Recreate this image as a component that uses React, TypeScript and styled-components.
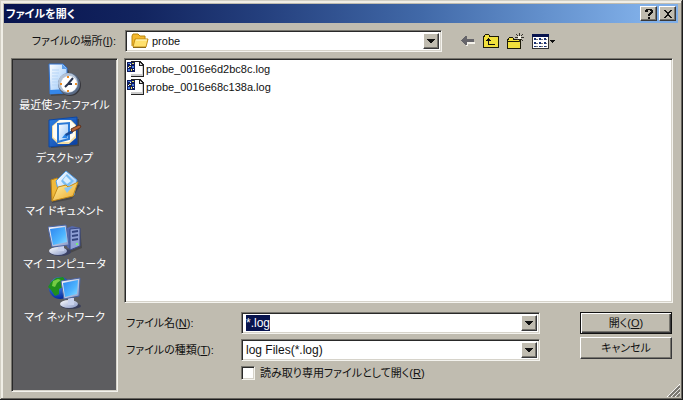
import React, { useEffect, useRef } from "react";
import styled, { createGlobalStyle, css } from "styled-components";

const face = "#c0bcb0";
const navy = "#08144e";

const GlobalStyle = createGlobalStyle`
  * { box-sizing: border-box; }
  html, body { margin: 0; padding: 0; background: ${face}; }
  body, button, input, select {
    font-family: "Liberation Sans", "Noto Sans CJK JP", sans-serif;
    font-size: 11px;
    line-height: 16px;
    color: #111;
    font-feature-settings: "palt";
  }
  svg { display: block; flex: none; }
`;

const sunken = css`
  border: 1px solid;
  border-color: #77756e #f4f3ee #f4f3ee #77756e;
  box-shadow: inset 1px 1px 0 #292929, inset -1px -1px 0 #d6d3ca;
`;

const raised = css`
  background: ${face};
  border: 1px solid;
  border-color: #fff #38383a #38383a #fff;
  box-shadow: inset -1px -1px 0 #77756e;
`;

const Dialog = styled.main`
  position: relative;
  display: flex;
  flex-direction: column;
  min-height: 100vh;
  padding: 4px 4px 3px;
  background: ${face};
  border-right: 1px solid #1c1c1c;
  border-bottom: 1px solid #1c1c1c;
  box-shadow: inset 1px 1px 0 #d2cfc4, inset -1px -1px 0 #66645e,
    inset 3px 3px 0 #f0eee6;
`;

const Face = styled.div`
  display: flex;
  flex-direction: column;
  flex: 1;
  background: ${face};
`;

const TitleBar = styled.header`
  display: flex;
  align-items: center;
  gap: 2px;
  height: 19px;
  padding: 0 2px;
  background: linear-gradient(90deg, ${navy} 0%, #12245f 20%, #243f7d 38%, #4169a8 62%, #6390cc 80%, #80afe8 95%);
`;

const Title = styled.h1`
  flex: 1;
  margin: 0;
  font-size: 11px;
  line-height: 18px;
  font-weight: 700;
  color: #fff;
`;

const CaptionButton = styled.button`
  ${raised}
  display: flex;
  align-items: center;
  justify-content: center;
  width: 17px;
  height: 15px;
  padding: 0;
`;

const TopRow = styled.div`
  display: flex;
  align-items: center;
  padding: 7px 5px 0 7px;
  height: 29px;
`;

const LookLabel = styled.label`
  width: 114px;
  padding-right: 9px;
  text-align: right;
  white-space: nowrap;
`;

const Combo = styled.div`
  ${sunken}
  display: flex;
  align-items: stretch;
  flex: 1;
  min-width: 0;
  height: 22px;
  padding: 2px;
  background: #fff;
`;

const fieldStyle = css`
  flex: 1;
  min-width: 0;
  width: 100%;
  padding: 0 2px;
  border: 0;
  outline: 0;
  background: transparent;
  border-radius: 0;
`;

const Select = styled.select<{ $small?: boolean }>`
  ${fieldStyle}
  appearance: none;
  font-size: ${(p) => (p.$small ? "11px" : "12px")};
`;

const NameInput = styled.input`
  ${fieldStyle}
  font-size: 12px;
  caret-color: transparent;
  &::selection { background: ${navy}; color: #fff; }
`;

const DropArrow = styled.span`
  ${raised}
  display: flex;
  align-items: center;
  justify-content: center;
  width: 16px;
`;

const ComboIcon = styled.span`
  display: flex;
  align-items: center;
  padding: 0 1px 0 3px;
`;

const Tools = styled.div`
  display: flex;
  align-items: center;
  gap: 8px;
  width: 231px;
  padding-left: 19px;
`;

const ToolButton = styled.button`
  display: flex;
  padding: 0;
  border: 0;
  background: transparent;
`;

const Content = styled.div`
  display: flex;
  flex: 1;
  gap: 6px;
  padding: 6px 5px 4px 7px;
`;

const Places = styled.nav`
  ${sunken}
  display: flex;
  flex-direction: column;
  width: 107px;
  padding-top: 3px;
  background: #5d5d60;
`;

const Place = styled.button`
  display: flex;
  flex-direction: column;
  align-items: center;
  height: 53px;
  padding: 1px 0 0;
  border: 0;
  background: transparent;
  color: #fff;
  white-space: nowrap;
`;

const PlaceText = styled.span`
  line-height: 16px;
`;

const Main = styled.section`
  display: flex;
  flex-direction: column;
  flex: 1;
  min-width: 0;
`;

const Files = styled.ul`
  ${sunken}
  flex: 1;
  margin: 0;
  padding: 1px 2px;
  list-style: none;
  background: #fff;
`;

const FileButton = styled.button`
  display: flex;
  align-items: center;
  gap: 2px;
  height: 18px;
  padding: 0;
  border: 0;
  background: transparent;
`;

const Form = styled.form`
  display: flex;
  gap: 40px;
  padding: 9px 1px 0 0;
`;

const Fields = styled.div`
  display: grid;
  grid-template-columns: 117px 1fr;
  row-gap: 5px;
  align-items: center;
  align-content: start;
  flex: 1;
  height: 80px;
`;

const FieldLabel = styled.label`
  padding-left: 2px;
  white-space: nowrap;
`;

const CheckRow = styled.label`
  grid-column: 2;
  display: flex;
  align-items: center;
  gap: 5px;
  height: 14px;
  white-space: nowrap;
`;

const CheckBox = styled.input`
  ${sunken}
  appearance: none;
  width: 14px;
  height: 14px;
  margin: 0;
  background: #fff;
`;

const Actions = styled.div`
  display: flex;
  flex-direction: column;
  gap: 3px;
  width: 92px;
`;

const ActionButton = styled.button<{ $primary?: boolean }>`
  ${raised}
  height: 22px;
  padding: 0;
  line-height: 18px;
  ${(p) =>
    p.$primary &&
    css`
      border-color: #111;
      box-shadow: inset 1px 1px 0 #fff, inset -1px -1px 0 #38383a, inset -2px -2px 0 #77756e;
    `}
`;

const Grip = styled.div`
  position: absolute;
  right: 2px;
  bottom: 2px;
`;

const Arrow = () => (
  <svg width="8" height="4" viewBox="0 0 8 4" shapeRendering="crispEdges" aria-hidden="true">
    <path d="M0 0h8v1H7v1H6v1H5v1H3V3H2V2H1V1H0z" fill="#111" />
  </svg>
);

const FolderIcon = () => (
  <svg width="18" height="16" viewBox="0 0 18 16" aria-hidden="true">
    <path d="M1 13V3l1-2h5l2 2h5v4" fill="#f5b92e" stroke="#b8860d" />
    <path d="M4 6h13l-2 8H2z" fill="#ffe06c" stroke="#c28d16" />
    <path d="M5 7h11" fill="none" stroke="#fff8c9" />
    <path d="M2 14.500h13" stroke="#8b6918" />
  </svg>
);

const BackIcon = () => (
  <svg width="14" height="10" viewBox="0 0 14 10" shapeRendering="crispEdges" aria-hidden="true">
    <path d="M2 5h1v1h1v1h1v1h1V6h8v2H7v2H5V9H4V8H3V7H2z" fill="#f4f2ea" />
    <path d="M0 4h1V3h1V2h1V1h1V0h2v3h7v3H6v3H4V8H3V7H2V6H1V5H0z" fill="#66656a" />
  </svg>
);

const UpIcon = () => (
  <svg width="16" height="14" viewBox="0 0 16 14" shapeRendering="crispEdges" aria-hidden="true">
    <path d="M0 2h1V1h1V0h4v1h1v1h9v12H0z" fill="#1c1a08" />
    <path d="M1 3h1V1h4v2h9v10H1z" fill="#f1e03c" />
    <path d="M5 4h1v1h1v1h1v1H6v3h6v1H5V7H3V6h1V5h1z" fill="#111" />
  </svg>
);

const NewFolderIcon = () => (
  <svg width="17" height="16" viewBox="0 0 17 16" shapeRendering="crispEdges" aria-hidden="true">
    <path d="M0 6h1V5h1V4h4v1h1v1h7v10H0z" fill="#1c1a08" />
    <path d="M1 7h1V5h4v2h7v1H1zM1 9h12v6H1z" fill="#f1e03c" />
    <path d="M12 0h1v3h-1zM12 6h1v3h-1zM8 4h3v1H8zM14 4h3v1h-3zM9 1h1v1h1v1h-1V2H9zM15 1h1v1h-1v1h-1V2h1zM14 6h1v1h1v1h-1V7h-1zM10 6h1v1h-1z" fill="#33312b" />
    <path d="M11 3h3v3h-3z" fill="#f5f3e8" />
  </svg>
);

const ViewIcon = () => (
  <svg width="24" height="15" viewBox="0 0 24 15" shapeRendering="crispEdges" aria-hidden="true">
    <path d="M0 0h17v15H0z" fill="#333" />
    <path d="M0 0h17v3H0z" fill="#08144e" />
    <path d="M1 3h15v11H1z" fill="#fff" />
    <path d="M2 4h2v2H2zM7 4h2v2H7zM12 4h2v2h-2zM2 8h2v2H2zM7 8h2v2H7zM12 8h2v2h-2zM2 12h2v1H2zM7 12h2v1H7zM12 12h2v1h-2z" fill="#1b3174" />
    <path d="M4 5h2v1H4zM9 5h2v1H9zM14 5h1v1h-1zM4 9h2v1H4zM9 9h2v1H9zM14 9h1v1h-1zM4 12h2v1H4zM9 12h2v1H9zM14 12h1v1h-1z" fill="#777" />
    <path d="M18 6h5v1h-1v1h-1v1h-1V8h-1V7h-1z" fill="#111" />
  </svg>
);

const LogIcon = () => (
  <svg width="17" height="16" viewBox="0 0 17 16" shapeRendering="crispEdges" aria-hidden="true">
    <path d="M4 0h9l4 4v12H4z" fill="#222" />
    <path d="M4 1h8v4h4v10H4z" fill="#fff" />
    <path d="M13 2h1v1h1v1h-2z" fill="#d8d8d8" />
    <path d="M4 13h12v2H4zM15 5h1v10h-1z" fill="#ccc" />
    <path d="M0 1h8v10H0z" fill="#101c5c" />
    <path d="M1 2h3v1H1zM5 5h2v2H5zM1 8h2v2H1z" fill="#477be0" />
    <path d="M5 2h2v1H5zM2 5h2v1H2zM4 8h1v2H4z" fill="#efe254" />
    <path d="M3 3h1v1H3zM6 8h1v1H6zM1 6h1v1H1z" fill="#fff" />
  </svg>
);

const Defs = () => (
  <svg width="0" height="0" aria-hidden="true">
    <defs>
      <linearGradient id="paper" x1="0" y1="0" x2="1" y2="1">
        <stop offset="0" stopColor="#fff" /><stop offset="1" stopColor="#8fc2f8" />
      </linearGradient>
      <linearGradient id="blue" x1="0" y1="0" x2="1" y2="1">
        <stop offset="0" stopColor="#2f82e4" /><stop offset="1" stopColor="#0b3d9e" />
      </linearGradient>
      <linearGradient id="screen" x1="0" y1="0" x2="1" y2="1">
        <stop offset="0" stopColor="#2d85ef" /><stop offset="0.6" stopColor="#4db4ff" /><stop offset="1" stopColor="#8eddff" />
      </linearGradient>
      <linearGradient id="gold" x1="0" y1="0" x2="1" y2="1">
        <stop offset="0" stopColor="#fff3a8" /><stop offset="1" stopColor="#eca624" />
      </linearGradient>
      <linearGradient id="metal" x1="0" y1="0" x2="1" y2="1">
        <stop offset="0" stopColor="#fff" /><stop offset="1" stopColor="#8797c6" />
      </linearGradient>
      <radialGradient id="globe" cx="0.35" cy="0.3" r="0.7">
        <stop offset="0" stopColor="#4c9cff" /><stop offset="1" stopColor="#062a9c" />
      </radialGradient>
    </defs>
  </svg>
);

const RecentIcon = () => (
  <svg width="34" height="34" viewBox="0 0 34 34" aria-hidden="true">
    <path d="M2 3h14l5 5v24l-18 1z" fill="#333" opacity="0.500" />
    <path d="M1 1h14l4 4v25L2 31z" fill="url(#paper)" stroke="#2e71cf" />
    <path d="M14 1v5h5" fill="#5c9eea" />
    <path d="M4 7h7M4 10h7M4 13h6M4 16h6M4 19h6M4 22h7" stroke="#b6d5f7" />
    <path d="M2 27l17-1v4L2 31z" fill="#3487ea" />
    <circle cx="22" cy="22" r="11" fill="#38383d" />
    <circle cx="21" cy="21" r="11" fill="#5b6c86" />
    <circle cx="20" cy="20" r="10" fill="#b3c2d6" />
    <circle cx="21" cy="21" r="8" fill="#fff" />
    <path d="M20 13v2M20 27v2M12 21h2M27 21h2" stroke="#ef8c21" strokeWidth="2" />
    <path d="M25 15l-5 6-3 3M20 21h4" fill="none" stroke="#29344e" strokeWidth="2" />
  </svg>
);

const DesktopIcon = () => (
  <svg width="34" height="34" viewBox="0 0 34 34" aria-hidden="true">
    <path d="M3 5l28-2v27L3 32z" fill="#333" opacity="0.600" />
    <path d="M1 4l28-3v27L1 31z" fill="url(#blue)" stroke="#0d47a4" />
    <path d="M11 4h12l5 5v13l-7 6H10l-6-6V10z" fill="#f3dda2" />
    <path d="M12 4h10l5 5v11l-6 6H11l-6-5V10z" fill="#fffdf4" />
    <path d="M10 8l11-1v16l-11 3z" fill="url(#paper)" stroke="#2b7ad6" strokeWidth="2" />
    <path d="M14 22l3-4 3 1-1 3z" fill="#2a86e6" />
    <path d="M17 18l7-4 1 3-7 3z" fill="#174b98" />
    <path d="M23 13l8-4 2 1-1 2-8 4z" fill="#b76235" stroke="#5d321e" />
  </svg>
);

const DocumentsIcon = () => (
  <svg width="34" height="34" viewBox="0 0 34 34" aria-hidden="true">
    <path d="M5 14l5-2 22 4-8 14-20 4z" fill="#333" opacity="0.500" />
    <path d="M3 11l6-2 3 3v17l-8 3z" fill="#f0b93a" stroke="#b98016" />
    <path d="M8 12L18 2l11 9-3 15-14 3z" fill="url(#paper)" stroke="#519ee6" />
    <path d="M13 12l6-7 7 7-7 7z" fill="#79bdf5" />
    <path d="M15 11l3-4 5 5-4 3z" fill="#d9eeff" />
    <path d="M4 32l6-14 8-2 2 2 10-5-5 14z" fill="url(#gold)" stroke="#c48a17" />
    <path d="M16 19l9-2-6 7z" fill="#8bc6f4" />
  </svg>
);

const ComputerIcon = () => (
  <svg width="34" height="34" viewBox="0 0 34 34" aria-hidden="true">
    <path d="M21 8l11-2 2 20-12 5z" fill="#333" opacity="0.500" />
    <path d="M19 6l5-2 8 2v18l-9 4-4-3z" fill="#5668a8" />
    <path d="M22 7l10-1v18l-10 4z" fill="#8fa0d5" stroke="#394985" />
    <path d="M24 10l6-1M24 14l6-1M24 18l6-1" stroke="#34457f" strokeWidth="2" />
    <path d="M28 22h2" stroke="#76ee75" strokeWidth="2" />
    <ellipse cx="12" cy="30" rx="11" ry="4" fill="#3b4164" />
    <ellipse cx="10" cy="29" rx="9" ry="4" fill="url(#metal)" />
    <path d="M10 22h6v7h-6z" fill="#c9d2ed" />
    <path d="M0 5l18-2 3 20-17 2z" fill="url(#metal)" stroke="#4b65a4" />
    <path d="M2 7l15-2 2 15-14 3z" fill="url(#screen)" />
  </svg>
);

const NetworkIcon = () => (
  <svg width="34" height="34" viewBox="0 0 34 34" aria-hidden="true">
    <circle cx="12" cy="13" r="11" fill="url(#globe)" />
    <path d="M3 7l5-4 7-1 2 3-4 3 2 4-4 2v5l-4 2-4-6-3-3z" fill="#1f8f1c" />
    <path d="M5 6l5-2 3 1-4 3-2 4-3-1z" fill="#74cc44" />
    <ellipse cx="23" cy="31" rx="10" ry="3" fill="#393d58" />
    <ellipse cx="21" cy="29" rx="9" ry="4" fill="url(#metal)" />
    <path d="M20 23h6v7h-6z" fill="#c9d2ed" />
    <path d="M13 6l19-3-1 18-15 3z" fill="url(#metal)" stroke="#4b65a4" />
    <path d="M15 8l15-3-1 14-12 3z" fill="url(#screen)" />
  </svg>
);

const places = [
  { text: "最近使ったファイル", Icon: RecentIcon },
  { text: "デスクトップ", Icon: DesktopIcon },
  { text: "マイ ドキュメント", Icon: DocumentsIcon },
  { text: "マイ コンピュータ", Icon: ComputerIcon },
  { text: "マイ ネットワーク", Icon: NetworkIcon },
];

const files = ["probe_0016e6d2bc8c.log", "probe_0016e68c138a.log"];

export default function App() {
  const nameRef = useRef<HTMLInputElement>(null);
  useEffect(() => {
    nameRef.current?.focus();
    nameRef.current?.select();
  }, []);

  return (
    <>
      <GlobalStyle />
      <Dialog>
        <Face>
          <TitleBar>
            <Title>ファイルを開く</Title>
            <CaptionButton aria-label="ヘルプ">
              <svg width="8" height="10" viewBox="0 0 8 10" shapeRendering="crispEdges">
                <path d="M1 0h6v1h1v3H7v1H6v1H5v1H3V5h1V4h1V3h1V2H5V1H3v2H0V1h1zM3 8h2v2H3z" fill="#111" />
              </svg>
            </CaptionButton>
            <CaptionButton aria-label="閉じる">
              <svg width="8" height="8" viewBox="0 0 8 8" shapeRendering="crispEdges">
                <path d="M0 0h2v1h1v1h2V1h1V0h2v1H7v1H6v1H5v2h1v1h1v1h1v1H6V7H5V6H3v1H2v1H0V7h1V6h1V5h1V3H2V2H1V1H0z" fill="#111" />
              </svg>
            </CaptionButton>
          </TitleBar>
          <TopRow>
            <LookLabel htmlFor="look">ファイルの場所(<u>I</u>):</LookLabel>
            <Combo>
              <ComboIcon><FolderIcon /></ComboIcon>
              <Select id="look" $small defaultValue="probe"><option>probe</option></Select>
              <DropArrow><Arrow /></DropArrow>
            </Combo>
            <Tools>
              <ToolButton aria-label="戻る"><BackIcon /></ToolButton>
              <ToolButton aria-label="上へ"><UpIcon /></ToolButton>
              <ToolButton aria-label="新しいフォルダ"><NewFolderIcon /></ToolButton>
              <ToolButton aria-label="表示"><ViewIcon /></ToolButton>
            </Tools>
          </TopRow>
          <Content>
            <Places>
              {places.map(({ text, Icon }) => (
                <Place key={text}><Icon /><PlaceText>{text}</PlaceText></Place>
              ))}
            </Places>
            <Main>
              <Files>
                {files.map((name) => (
                  <li key={name}><FileButton><LogIcon />{name}</FileButton></li>
                ))}
              </Files>
              <Form onSubmit={(e) => e.preventDefault()}>
                <Fields>
                  <FieldLabel htmlFor="name">ファイル名(<u>N</u>):</FieldLabel>
                  <Combo>
                    <NameInput id="name" ref={nameRef} defaultValue="*.log" />
                    <DropArrow><Arrow /></DropArrow>
                  </Combo>
                  <FieldLabel htmlFor="type">ファイルの種類(<u>T</u>):</FieldLabel>
                  <Combo>
                    <Select id="type"><option>log Files(*.log)</option></Select>
                    <DropArrow><Arrow /></DropArrow>
                  </Combo>
                  <CheckRow>
                    <CheckBox type="checkbox" />
                    <span>読み取り専用ファイルとして開く(<u>R</u>)</span>
                  </CheckRow>
                </Fields>
                <Actions>
                  <ActionButton type="submit" $primary>開く(<u>O</u>)</ActionButton>
                  <ActionButton type="button">キャンセル</ActionButton>
                </Actions>
              </Form>
            </Main>
          </Content>
        </Face>
        <Grip>
          <svg width="13" height="13" viewBox="0 0 13 13" aria-hidden="true">
            <path d="M0 13L13 0M4 13l9-9M8 13l5-5" stroke="#fff" />
            <path d="M2 13L13 2M6 13l7-7M10 13l3-3" stroke="#77756e" strokeWidth="2" />
          </svg>
        </Grip>
        <Defs />
      </Dialog>
    </>
  );
}
